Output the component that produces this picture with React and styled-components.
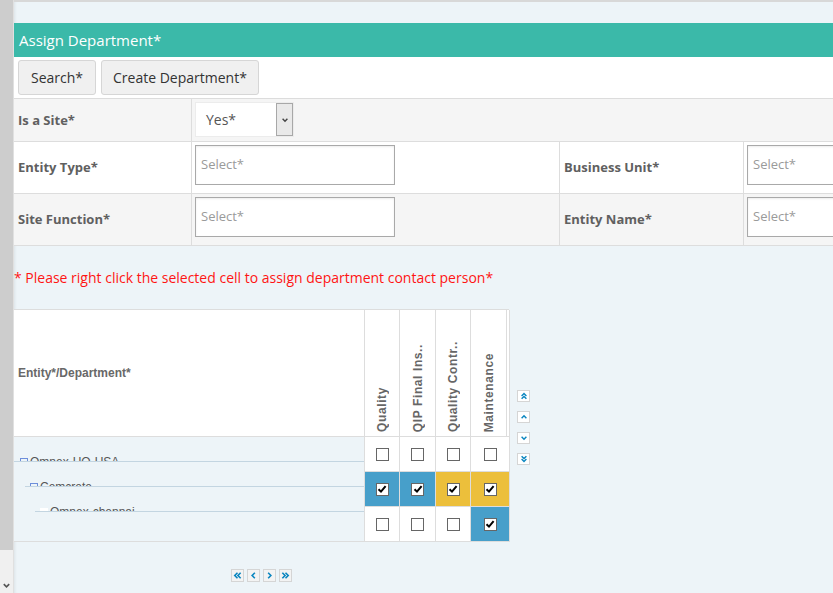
import React from 'react';
import styled, { createGlobalStyle } from 'styled-components';

const Global = createGlobalStyle`
  html, body { margin: 0; padding: 0; overflow: hidden; background: #edf4f8; }
  body { font-family: "Open Sans", "Liberation Sans", sans-serif; }
  * { box-sizing: border-box; }
`;

const Page = styled.div`
  display: flex;
  width: 833px;
  height: 593px;
  overflow: hidden;
`;

const ScrollTrack = styled.div`
  width: 14px;
  flex: none;
  background: #f0f0f0;
  border-right: 1px solid #e0e0e0;
  display: flex;
  flex-direction: column;
`;

const ScrollThumb = styled.div`
  height: 550px;
  width: 13px;
  background: #cdcdcd;
`;

const ScrollArrow = styled.div`
  margin-top: auto;
  height: 16px;
  width: 13px;
  display: flex;
  align-items: center;
  justify-content: center;
`;

const Main = styled.div`
  flex: 1;
  min-width: 0;
  background: #edf4f8;
  border-top: 2px solid #d8d8d8;
  padding-top: 21px;
  overflow: hidden;
  box-shadow: inset 3px 0 3px -2px rgba(0, 0, 0, 0.07);
`;

const PanelHeader = styled.div`
  height: 34px;
  background: #3bb9a9;
  color: #fff;
  font-size: 15px;
  padding-left: 5px;
  display: flex;
  align-items: center;
`;

const Toolbar = styled.div`
  height: 42px;
  background: #fff;
  border-bottom: 1px solid #dcdcdc;
  padding: 3px 4px 0;
  display: flex;
  align-items: flex-start;
  gap: 5px;
`;

const Button = styled.button`
  height: 35px;
  padding: 0 ${(p) => p.$px || 12}px;
  background: #f0f0f0;
  border: 1px solid #d6d6d6;
  border-radius: 3px;
  font-family: "Open Sans", "Liberation Sans", sans-serif;
  font-size: 14px;
  color: #333;
`;

const Form = styled.div`
  width: 1000px;
`;

const FormRow = styled.div`
  display: grid;
  grid-template-columns: 178px 368px 184px 1fr;
  height: ${(p) => p.$h}px;
  background: ${(p) => (p.$alt ? '#f5f5f5' : '#fff')};
  border-bottom: 1px solid #dddddd;
`;

const LabelCell = styled.div`
  border-right: 1px solid #dddddd;
  padding: 0 0 1px 4px;
  display: flex;
  align-items: center;
  font-size: 13px;
  font-weight: 700;
  color: #606060;
`;

const ValueCell = styled.div`
  border-right: 1px solid #dddddd;
  padding: 3px 0 0 3px;
  display: flex;
  align-items: flex-start;
  grid-column: ${(p) => (p.$span ? '2 / -1' : 'auto')};
`;

const SelectBox = styled.div`
  width: 99px;
  height: 35px;
  background: #fff;
  border: 1px solid #ececec;
  display: flex;
  align-items: stretch;
`;

const SelectValue = styled.div`
  flex: 1;
  padding-left: 10px;
  display: flex;
  align-items: center;
  font-size: 14px;
  color: #555;
`;

const SelectArrow = styled.div`
  width: 17px;
  background: #e9e9e9;
  border: 1px solid #a8a8a8;
  display: flex;
  align-items: center;
  justify-content: center;
`;

const TextInput = styled.div`
  width: ${(p) => p.$w || 200}px;
  height: 40px;
  border: 1px solid #a9a9a9;
  background: #fff;
  box-shadow: inset 0 1px 2px rgba(0, 0, 0, 0.08);
  padding: 0 5px 2px;
  display: flex;
  align-items: center;
  font-size: 13px;
  color: #9a9a9a;
`;

const Note = styled.div`
  height: 63px;
  display: flex;
  align-items: center;
  font-size: 14px;
  color: #ff1414;
`;

const MatrixArea = styled.div`
  display: flex;
  align-items: flex-start;
`;

const MatrixColumn = styled.div`
  width: 495px;
  display: flex;
  flex-direction: column;
`;

const Matrix = styled.div`
  display: grid;
  grid-template-columns: 351px 35px 36px 35px 36px 3px;
  grid-template-rows: 127px 35px 35px 35px;
  border-top: 1px solid #dddddd;
  font-family: "Liberation Sans", Arial, sans-serif;
`;

const CornerHead = styled.div`
  background: #fff;
  border-right: 1px solid #dddddd;
  border-bottom: 1px solid #dddddd;
  padding-left: 4px;
  display: flex;
  align-items: center;
  font-size: 12px;
  font-weight: 700;
  color: #686868;
`;

const DeptHead = styled.div`
  background: #fff;
  border-right: 1px solid #dddddd;
  border-bottom: 1px solid #dddddd;
  display: flex;
  align-items: flex-end;
  justify-content: center;
  padding-bottom: 4px;
`;

const DeptLabel = styled.span`
  writing-mode: vertical-rl;
  transform: rotate(180deg);
  font-size: 12px;
  font-weight: 700;
  letter-spacing: 0.6px;
  color: #666;
  white-space: nowrap;
`;

const TreeCell = styled.div`
  grid-column: 1;
  grid-row: 2 / 5;
  background: #edf4f8;
  border-right: 1px solid #dddddd;
  border-bottom: 1px solid #dddddd;
  display: flex;
  flex-direction: column;
`;

const TreeItem = styled.div`
  height: 25px;
  margin-left: ${(p) => p.$indent}px;
  padding: 18px 0 0 ${(p) => p.$pad}px;
  border-bottom: 1px solid #c3d5e1;
  overflow: hidden;
  display: flex;
  align-items: flex-start;
  font-size: 12px;
  line-height: 14px;
  color: #555;
  white-space: nowrap;
`;

const TreeIcon = styled.span`
  width: 8px;
  height: 8px;
  margin: 3px 2px 0 0;
  flex: none;
  border: 1px solid ${(p) => (p.$leaf ? '#fff' : '#6d8edb')};
  background: ${(p) => (p.$leaf ? '#fff' : 'transparent')};
`;

const CheckCell = styled.div`
  grid-column: ${(p) => (p.$wide ? 'span 2' : 'auto')};
  background: ${(p) => (p.$tone === 'blue' ? '#479fca' : p.$tone === 'yellow' ? '#ecbf3b' : '#fff')};
  border-right: 1px solid #dddddd;
  border-bottom: 1px solid #dddddd;
  display: flex;
  align-items: center;
  justify-content: center;
`;

const Box = styled.span`
  width: 13px;
  height: 13px;
  background: #fff;
  border: 1px solid #666;
  display: flex;
  align-items: center;
  justify-content: center;
`;

const SideArrows = styled.div`
  margin: 81px 0 0 8px;
  display: flex;
  flex-direction: column;
  gap: 9px;
`;

const SmallBtn = styled.span`
  width: 13px;
  height: ${(p) => p.$h || 12}px;
  background: ${(p) => p.$bg || '#fff'};
  border: 1px solid #d5d5d5;
  display: flex;
  align-items: center;
  justify-content: center;
`;

const Pager = styled.div`
  margin-top: 27px;
  display: flex;
  justify-content: center;
  gap: 3px;
`;

const BLUE = '#0b86c0';

const Chevron = ({ dir = 'up', double = false, color = BLUE, size = 9 }) => {
  const rot = { up: 0, down: 180, left: 270, right: 90 }[dir];
  return (
    <svg width={size} height={size} viewBox="0 0 10 10" style={{ transform: `rotate(${rot}deg)` }}>
      {double ? (
        <>
          <path d="M2 5 L5 2 L8 5" fill="none" stroke={color} strokeWidth="1.8" />
          <path d="M2 8.5 L5 5.5 L8 8.5" fill="none" stroke={color} strokeWidth="1.8" />
        </>
      ) : (
        <path d="M2 6.5 L5 3.5 L8 6.5" fill="none" stroke={color} strokeWidth="1.8" />
      )}
    </svg>
  );
};

const Check = ({ on }) => (
  <Box>
    {on && (
      <svg width="10" height="10" viewBox="0 0 10 10">
        <path d="M1.5 5.2 L4 7.6 L8.6 2.2" fill="none" stroke="#000" strokeWidth="2" />
      </svg>
    )}
  </Box>
);

const depts = ['Quality', 'QIP Final Ins..', 'Quality Contr..', 'Maintenance'];

const rows = [
  [{}, {}, {}, {}],
  [{ on: true, tone: 'blue' }, { on: true, tone: 'blue' }, { on: true, tone: 'yellow' }, { on: true, tone: 'yellow' }],
  [{}, {}, {}, { on: true, tone: 'blue' }],
];

const tree = [
  { name: 'Omnex-HQ-USA', indent: 0, pad: 6 },
  { name: 'Cemcrete', indent: 11, pad: 5 },
  { name: 'Omnex-chennai', indent: 21, pad: 5, leaf: true },
];

export default function App() {
  return (
    <>
      <Global />
      <Page>
        <ScrollTrack>
          <ScrollThumb />
          <ScrollArrow>
            <Chevron dir="down" color="#555" size={9} />
          </ScrollArrow>
        </ScrollTrack>
        <Main>
          <PanelHeader>Assign Department*</PanelHeader>
          <Toolbar>
            <Button>Search*</Button>
            <Button $px={11}>Create Department*</Button>
          </Toolbar>
          <Form>
            <FormRow $h={43} $alt>
              <LabelCell>Is a Site*</LabelCell>
              <ValueCell $span>
                <SelectBox>
                  <SelectValue>Yes*</SelectValue>
                  <SelectArrow>
                    <Chevron dir="down" color="#444" size={8} />
                  </SelectArrow>
                </SelectBox>
              </ValueCell>
            </FormRow>
            <FormRow $h={52}>
              <LabelCell>Entity Type*</LabelCell>
              <ValueCell>
                <TextInput>Select*</TextInput>
              </ValueCell>
              <LabelCell>Business Unit*</LabelCell>
              <ValueCell>
                <TextInput>Select*</TextInput>
              </ValueCell>
            </FormRow>
            <FormRow $h={52} $alt>
              <LabelCell>Site Function*</LabelCell>
              <ValueCell>
                <TextInput>Select*</TextInput>
              </ValueCell>
              <LabelCell>Entity Name*</LabelCell>
              <ValueCell>
                <TextInput>Select*</TextInput>
              </ValueCell>
            </FormRow>
          </Form>
          <Note>* Please right click the selected cell to assign department contact person*</Note>
          <MatrixArea>
            <MatrixColumn>
              <Matrix>
                <CornerHead>Entity*/Department*</CornerHead>
                {depts.map((d) => (
                  <DeptHead key={d}>
                    <DeptLabel>{d}</DeptLabel>
                  </DeptHead>
                ))}
                <DeptHead />
                <TreeCell>
                  {tree.map((t) => (
                    <TreeItem key={t.name} $indent={t.indent} $pad={t.pad}>
                      <TreeIcon $leaf={t.leaf} />
                      {t.name}
                    </TreeItem>
                  ))}
                </TreeCell>
                {rows.map((r, i) =>
                  r.map((c, j) => (
                    <CheckCell key={`${i}-${j}`} $tone={c.tone} $wide={j === 3}>
                      <Check on={c.on} />
                    </CheckCell>
                  ))
                )}
              </Matrix>
              <Pager>
                <SmallBtn $h={13} $bg="#f3f3f3"><Chevron dir="left" double /></SmallBtn>
                <SmallBtn $h={13} $bg="#f3f3f3"><Chevron dir="left" /></SmallBtn>
                <SmallBtn $h={13} $bg="#f3f3f3"><Chevron dir="right" /></SmallBtn>
                <SmallBtn $h={13} $bg="#f3f3f3"><Chevron dir="right" double /></SmallBtn>
              </Pager>
            </MatrixColumn>
            <SideArrows>
              <SmallBtn><Chevron dir="up" double size={8} /></SmallBtn>
              <SmallBtn><Chevron dir="up" size={8} /></SmallBtn>
              <SmallBtn><Chevron dir="down" size={8} /></SmallBtn>
              <SmallBtn><Chevron dir="down" double size={8} /></SmallBtn>
            </SideArrows>
          </MatrixArea>
        </Main>
      </Page>
    </>
  );
}
